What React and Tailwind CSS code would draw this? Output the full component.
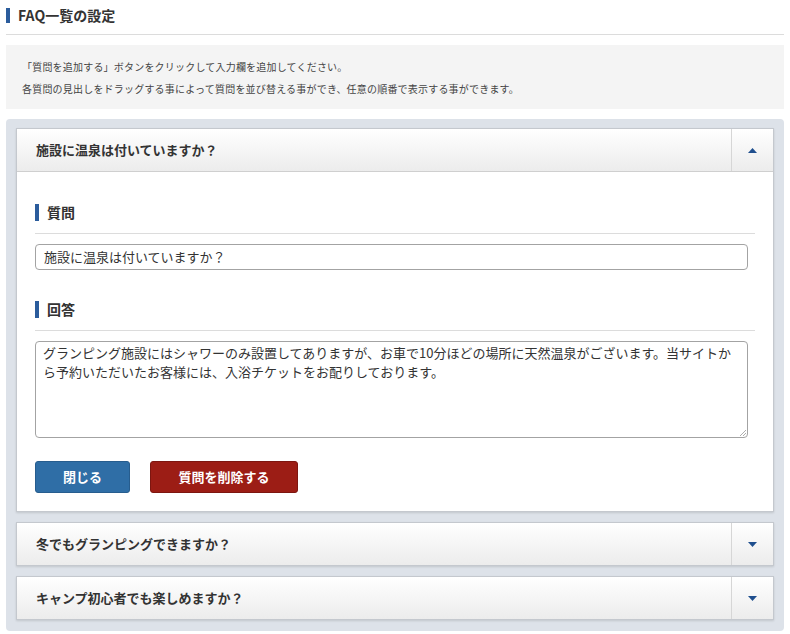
import React from "react";

const font = { fontFamily: '"Noto Sans CJK JP", "Noto Sans", sans-serif' };

function Arrow({ up }) {
  return (
    <svg width="9" height="5" viewBox="0 0 9 5">
      {up ? <polygon points="0,5 4.5,0 9,5" fill="#1f4f8e" /> : <polygon points="0,0 9,0 4.5,5" fill="#1f4f8e" />}
    </svg>
  );
}

function Header({ text, up }) {
  return (
    <div className="flex h-[42px] bg-gradient-to-b from-white to-[#ececec]">
      <div className="flex-1 flex items-center pl-[19px] text-[13px] font-bold text-[#333]">{text}</div>
      <div className="w-[42px] border-l border-[#d6d6d6] flex items-center justify-center">
        <Arrow up={up} />
      </div>
    </div>
  );
}

function SubHeading({ text }) {
  return (
    <div className="flex items-center h-[18px]">
      <div className="w-[4px] h-[17px] bg-[#2b5c9c]" />
      <div className="ml-[8px] text-[14px] font-bold text-[#333] leading-[18px]">{text}</div>
    </div>
  );
}

export default function App() {
  return (
    <div className="w-[790px] h-[634px] bg-white px-[6px] pt-[7px]" style={font}>
      <div className="flex items-center h-[16px]">
        <div className="w-[4px] h-[15px] bg-[#2b5c9c]" />
        <div className="ml-[8px] text-[14px] font-bold text-[#333] leading-[16px]">FAQ一覧の設定</div>
      </div>
      <div className="mt-[11px] border-t border-[#dcdcdc]" />
      <div className="mt-[10px] h-[64px] bg-[#f4f4f4] pl-[16px] pt-[11px] text-[10px] leading-[22px] tracking-[0.2px] text-[#444]">
        <div>「質問を追加する」ボタンをクリックして入力欄を追加してください。</div>
        <div>各質問の見出しをドラッグする事によって質問を並び替える事ができ、任意の順番で表示する事ができます。</div>
      </div>
      <div className="mt-[10px] bg-[#dde2e9] rounded-[4px] pt-[9px] px-[10px] pb-[11px] flex flex-col gap-[10px]">
        <div className="border border-[#c4c8ce] shadow-[0_1px_2px_rgba(0,0,0,0.12)]">
          <Header text="施設に温泉は付いていますか？" up />
          <div className="bg-white border-t border-[#cfcfcf] pt-[31px] px-[18px] pb-[18px]">
            <SubHeading text="質問" />
            <div className="mt-[12px] border-t border-[#dcdcdc]" />
            <div className="mt-[10px] mr-[7px] h-[26px] border border-[#a3a3a3] rounded-[4px] px-[8px] flex items-center text-[13px] text-[#333]">
              施設に温泉は付いていますか？
            </div>
            <div className="mt-[30px]">
              <SubHeading text="回答" />
            </div>
            <div className="mt-[12px] border-t border-[#dcdcdc]" />
            <div className="mt-[10px] mr-[7px] h-[97px] border border-[#a3a3a3] rounded-[4px] px-[7px] pt-[1px] text-[13px] leading-[19px] text-[#333] relative">
              グランピング施設にはシャワーのみ設置してありますが、お車で10分ほどの場所に天然温泉がございます。当サイトから予約いただいたお客様には、入浴チケットをお配りしております。
              <svg className="absolute right-[1px] bottom-[1px]" width="7" height="7" viewBox="0 0 7 7">
                <line x1="1" y1="7" x2="7" y2="1" stroke="#999" strokeWidth="0.8" />
                <line x1="4" y1="7" x2="7" y2="4" stroke="#999" strokeWidth="0.8" />
              </svg>
            </div>
            <div className="mt-[23px] flex gap-[20px]">
              <div className="w-[95px] h-[32px] bg-[#2f6ea6] border border-[#275d8e] rounded-[3px] flex items-center justify-center text-white text-[13px] font-bold">
                閉じる
              </div>
              <div className="w-[148px] h-[32px] bg-[#9c1d15] border border-[#7d1610] rounded-[3px] flex items-center justify-center text-white text-[13px] font-bold">
                質問を削除する
              </div>
            </div>
          </div>
        </div>
        <div className="border border-[#c4c8ce] shadow-[0_1px_2px_rgba(0,0,0,0.12)]">
          <Header text="冬でもグランピングできますか？" />
        </div>
        <div className="border border-[#c4c8ce] shadow-[0_1px_2px_rgba(0,0,0,0.12)]">
          <Header text="キャンプ初心者でも楽しめますか？" />
        </div>
      </div>
    </div>
  );
}
